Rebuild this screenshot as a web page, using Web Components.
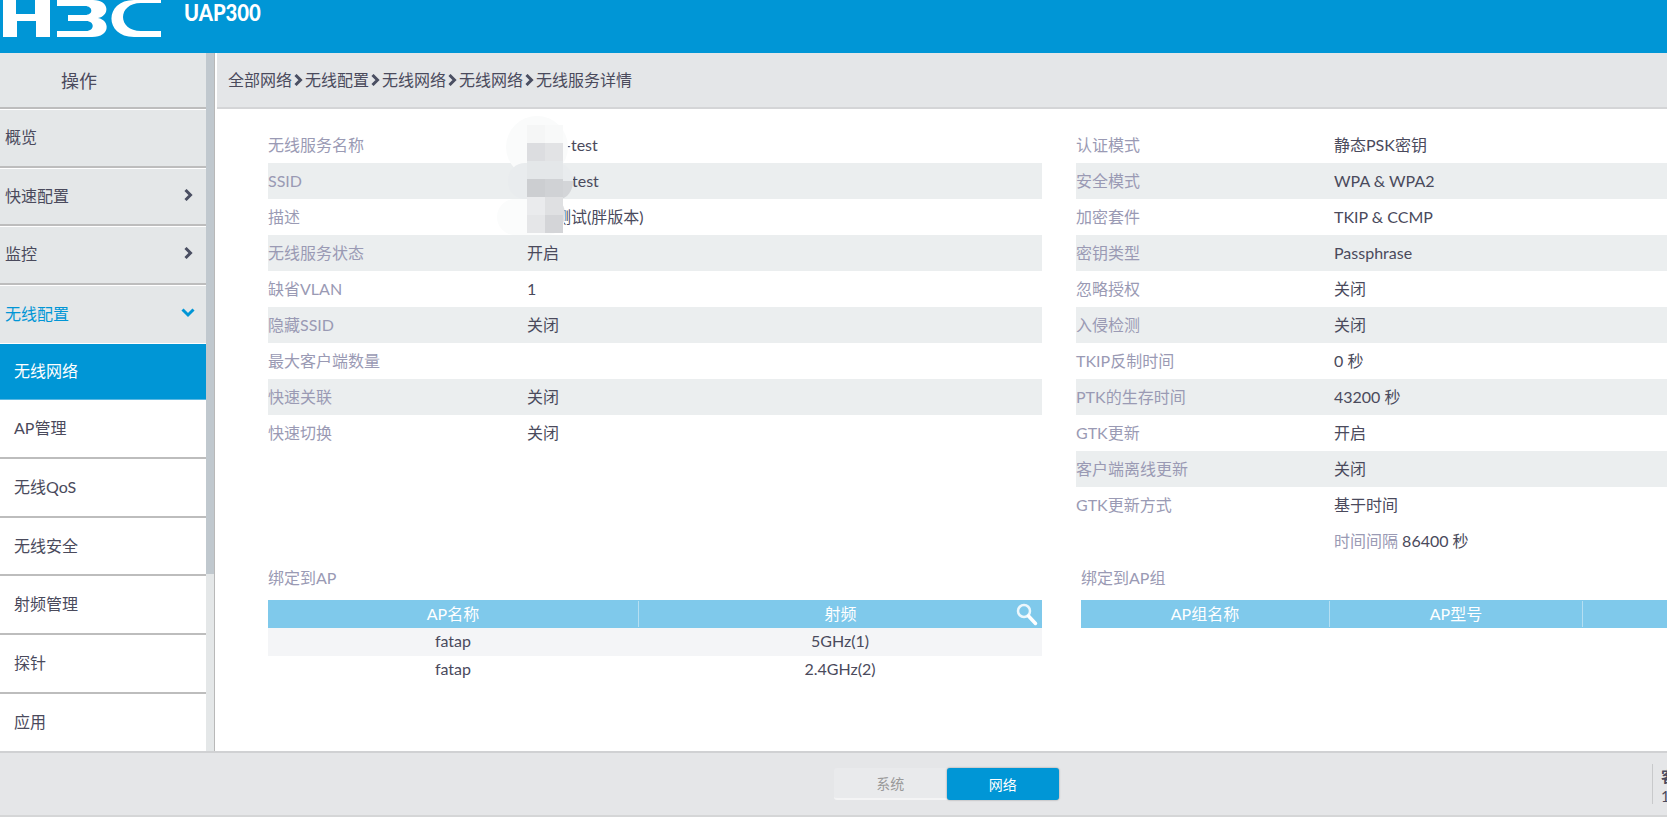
<!DOCTYPE html>
<html lang="zh">
<head>
<meta charset="utf-8">
<title>UAP300</title>
<style>
  html, body { margin: 0; height: 818px; overflow: hidden; background: #fff; }
  body { font: 16px Lato, "Noto Sans CJK SC", sans-serif; color: #4a4a5c; display: flex; flex-direction: column; }
</style>
</head>
<body>
<template id="chev-right"><svg width="9" height="12" viewBox="0 0 9 12" fill="none" stroke="currentColor" stroke-width="3"><path d="M1.5 1l5 5-5 5"/></svg></template>

<app-header product="UAP300"></app-header>
<app-shell>
  <side-nav slot="nav"></side-nav>
  <bread-crumb slot="crumb" path="全部网络,无线配置,无线网络,无线网络,无线服务详情"></bread-crumb>
  <service-detail slot="body">
    <kv-list slot="left" style="--key-width:259px">
      <kv-row label="无线服务名称"><span style="padding-left:38px">-test</span></kv-row>
      <kv-row label="SSID"><span style="padding-left:45px">test</span></kv-row>
      <kv-row label="描述"><span style="padding-left:28px">测试(胖版本)</span></kv-row>
      <kv-row label="无线服务状态">开启</kv-row>
      <kv-row label="缺省VLAN">1</kv-row>
      <kv-row label="隐藏SSID">关闭</kv-row>
      <kv-row label="最大客户端数量"></kv-row>
      <kv-row label="快速关联">关闭</kv-row>
      <kv-row label="快速切换">关闭</kv-row>
    </kv-list>
    <kv-list slot="right" style="--key-width:258px">
      <kv-row label="认证模式">静态PSK密钥</kv-row>
      <kv-row label="安全模式">WPA &amp; WPA2</kv-row>
      <kv-row label="加密套件">TKIP &amp; CCMP</kv-row>
      <kv-row label="密钥类型">Passphrase</kv-row>
      <kv-row label="忽略授权">关闭</kv-row>
      <kv-row label="入侵检测">关闭</kv-row>
      <kv-row label="TKIP反制时间">0 秒</kv-row>
      <kv-row label="PTK的生存时间">43200 秒</kv-row>
      <kv-row label="GTK更新">开启</kv-row>
      <kv-row label="客户端离线更新">关闭</kv-row>
      <kv-row label="GTK更新方式">基于时间</kv-row>
      <kv-row label="" plain><span style="color:#9a9ab4">时间间隔</span> 86400 秒</kv-row>
    </kv-list>
    <bind-table slot="bind-left" title="绑定到AP" cols="370,404" heads="AP名称,射频" rows="fatap|5GHz(1);fatap|2.4GHz(2)" search></bind-table>
    <bind-table slot="bind-right" title="绑定到AP组" cols="248,253,340" heads="AP组名称,AP型号,"></bind-table>
  </service-detail>
  <blur-patch slot="body"></blur-patch>
</app-shell>
<app-footer></app-footer>

<script>
const chevron = () => document.getElementById('chev-right').innerHTML;

class AppHeader extends HTMLElement {
  constructor() {
    super();
    this.attachShadow({ mode: 'open' });
    this.shadowRoot.innerHTML = `
      <style>
        :host { display: flex; flex: none; height: 53px; background: #0096d6; overflow: hidden; }
        svg { flex: none; display: block; }
        b { margin-left: 14px; color: #fff; font-size: 22px; line-height: 26px; height: 26px; font-weight: 900; transform: scaleX(.92); transform-origin: left; }
      </style>
      <svg width="170" height="53" viewBox="0 0 170 53" fill="#fff">
        <path d="M3 0h13v14h19V0h15v37H36V21H17v16H3z"/>
        <path d="M57 0h36c17 0 17 16 5 18 12 2 13 19-6 19H57v-6h29c9 0 9-10 0-10H68v-6h17c9 0 8-9 0-9H57z"/>
        <path d="M161 0v3h-20c-24 0-24 28 0 28h20v6h-27c-30 0-30-37 0-37z"/>
      </svg>
      <b>${this.getAttribute('product')}</b>`;
  }
}
customElements.define('app-header', AppHeader);

class AppShell extends HTMLElement {
  constructor() {
    super();
    this.attachShadow({ mode: 'open' });
    this.shadowRoot.innerHTML = `
      <style>
        :host { display: flex; flex: 1; min-height: 0; }
        .nav { flex: none; width: 215px; display: flex; }
        .main { flex: 1; min-width: 0; position: relative; overflow: hidden; border-left: 2px solid #fff; }
      </style>
      <div class="nav"><slot name="nav"></slot></div>
      <div class="main"><slot name="crumb"></slot><slot name="body"></slot></div>`;
  }
}
customElements.define('app-shell', AppShell);

class SideNav extends HTMLElement {
  constructor() {
    super();
    this.attachShadow({ mode: 'open' });
    const top = [['概览'], ['快速配置', 'right'], ['监控', 'right'], ['无线配置', 'down']];
    const sub = ['AP管理', '无线QoS', '无线安全', '射频管理', '探针', '应用'];
    const down = '<svg width="14" height="10" viewBox="0 0 14 10" fill="none" stroke="#0096d6" stroke-width="3"><path d="M1.5 1.5L7 7l5.5-5.5"/></svg>';
    this.shadowRoot.innerHTML = `
      <style>
        :host { display: flex; width: 215px; height: 100%; }
        .list { width: 206px; display: flex; flex-direction: column; background: #fff; }
        .title { height: 56px; flex: none; display: flex; align-items: center; padding-left: 61px; background: #e4e7e8; font-size: 18px; border-bottom: 2px solid #bdbdbd; box-sizing: border-box; }
        .item { display: flex; align-items: center; justify-content: space-between; box-sizing: border-box; padding: 0 13px 3px 5px; background: #e4e7e8; border-bottom: 2px solid #bdbdbd; border-top: 1px solid #fff; color: #4a4a5c; }
        .top { flex: none; height: 58.5px; }
        .item.open { color: #0096d6; border-bottom: 0; padding-right: 11px; }
        .item svg { color: #4a4f62; }
        .sub { flex: 1; min-height: 0; background: #fff; padding-left: 14px; border-top: 0; }
        .sub.active { flex: none; height: 57px; background: #0096d6; color: #fff; border-bottom: 1px solid #5bb8e2; border-top: 1px solid #fff; }
        .sub:last-child { border-bottom: 0; }
        .track { width: 8px; background: #e4e7e8; }
        .thumb { height: 521px; background: #c0c8ce; }
        .edge { width: 1px; background: #b8b8b8; }
      </style>
      <div class="list">
        <div class="title">操作</div>
        ${top.map(([t, k]) => `<div class="item top ${k === 'down' ? 'open' : ''}"><span>${t}</span>${k === 'right' ? chevron() : k === 'down' ? down : ''}</div>`).join('')}
        <div class="item sub active"><span>无线网络</span></div>
        ${sub.map(t => `<div class="item sub"><span>${t}</span></div>`).join('')}
      </div>
      <div class="track"><div class="thumb"></div></div>
      <div class="edge"></div>`;
  }
}
customElements.define('side-nav', SideNav);

class BreadCrumb extends HTMLElement {
  constructor() {
    super();
    this.attachShadow({ mode: 'open' });
    const parts = this.getAttribute('path').split(',');
    this.shadowRoot.innerHTML = `
      <style>
        :host { display: flex; align-items: center; height: 56px; box-sizing: border-box; padding: 0 0 2px 11px; background: #e4e6e8; border-bottom: 2px solid #d4d5d7; color: #4a4a5c; }
        svg { margin: 1px 2px 0 2px; color: #4a4f62; }
      </style>
      ${parts.map(p => `<span>${p}</span>`).join(chevron())}`;
  }
}
customElements.define('bread-crumb', BreadCrumb);

class ServiceDetail extends HTMLElement {
  constructor() {
    super();
    this.attachShadow({ mode: 'open' });
    this.shadowRoot.innerHTML = `
      <style>
        :host { display: grid; grid-template-columns: 774px 774px; column-gap: 34px; padding: 18px 0 0 51px; width: 1640px; }
        .bind-right { padding-left: 5px; }
      </style>
      <slot name="left"></slot><slot name="right"></slot>
      <div><slot name="bind-left"></slot></div>
      <div class="bind-right"><slot name="bind-right"></slot></div>`;
  }
}
customElements.define('service-detail', ServiceDetail);

class KvList extends HTMLElement {
  constructor() {
    super();
    this.attachShadow({ mode: 'open' }).innerHTML = `<style>:host { display: block; }</style><slot></slot>`;
  }
}
customElements.define('kv-list', KvList);

class KvRow extends HTMLElement {
  constructor() {
    super();
    this.attachShadow({ mode: 'open' });
    this.shadowRoot.innerHTML = `
      <style>
        :host { display: flex; height: 36px; box-sizing: border-box; padding-bottom: 2px; align-items: center; }
        :host(:nth-child(even):not([plain])) { background: #ebeeef; }
        .k { flex: none; width: var(--key-width); color: #9a9ab4; }
        .v { color: #4a4a5c; }
      </style>
      <span class="k">${this.getAttribute('label')}</span>
      <span class="v"><slot></slot></span>`;
  }
}
customElements.define('kv-row', KvRow);

class BindTable extends HTMLElement {
  constructor() {
    super();
    this.attachShadow({ mode: 'open' });
    const cols = this.getAttribute('cols').split(',').map(c => c + 'px').join(' ');
    const heads = this.getAttribute('heads').split(',');
    const rows = (this.getAttribute('rows') || '').split(';').filter(Boolean).map(r => r.split('|'));
    const search = this.hasAttribute('search') ? `<svg class="search" width="22" height="24" viewBox="0 0 22 24" fill="none" stroke="#fff"><circle cx="8" cy="9" r="6" stroke-width="2.5" opacity=".85"/><path d="M12.5 14l7 7.5" stroke-width="3.5" stroke-linecap="round"/></svg>` : '';
    this.shadowRoot.innerHTML = `
      <style>
        :host { display: block; position: relative; }
        h4 { margin: 0; font: inherit; color: #9a9ab4; height: 41px; line-height: 37px; }
        .row { display: grid; grid-template-columns: ${cols}; height: 28px; box-sizing: border-box; align-items: center; text-align: center; }
        .cells { padding-bottom: 3px; }
        .head { background: #7fc9eb; color: #fff; }
        .head span { height: 26px; line-height: 25px; border-left: 1px solid #b5dff2; }
        .head span:first-child { border-left: 0; }
        .search { position: absolute; right: 4px; top: 43px; }
      </style>
      <h4>${this.getAttribute('title')}</h4>
      <div class="row head">${heads.map(h => `<span>${h}</span>`).join('')}</div>
      ${rows.map((r, i) => `<div class="row cells" style="background:${i % 2 ? '#fff' : '#f4f5f7'}">${r.map(c => `<span>${c}</span>`).join('')}</div>`).join('')}
      ${search}`;
  }
}
customElements.define('bind-table', BindTable);

// the smudged-out part of the name in the reference
class BlurPatch extends HTMLElement {
  constructor() {
    super();
    this.attachShadow({ mode: 'open' });
    const cells = [
      ['#f5f6f6', '#f8f9f9'], ['#dcdde0', '#e2e3e5'], ['#e4e7e9', '#e4e7e9'],
      ['#ccced1', '#d0d2d5'], ['#eaebed', '#dfe0e2'], ['#e5e6e8', '#d4d5d8']
    ];
    this.shadowRoot.innerHTML = `
      <style>:host { position: absolute; left: 278px; top: 62px; width: 90px; height: 125px; pointer-events: none; }</style>
      <svg width="90" height="125" viewBox="0 0 90 125">
        <circle cx="42" cy="32" r="31" fill="#fafbfb"/>
        <rect x="13" y="48" width="65" height="36" rx="17" fill="#e9ecee"/>
        <path d="M60 66h18c0 10-6 18-14 18h-4z" fill="#d3d5d8"/>
        <rect x="2" y="84" width="68" height="36" rx="18" fill="#fbfcfc"/>
        <path d="M55 84h8c5 4 7 10 7 16s-4 14-10 18h-5z" fill="#dfe0e2"/>
        ${cells.map((row, i) => row.map((c, j) => `<rect x="${32 + j * 18}" y="${10 + i * 18}" width="18" height="18" fill="${c}"/>`).join('')).join('')}
      </svg>`;
  }
}
customElements.define('blur-patch', BlurPatch);

class AppFooter extends HTMLElement {
  constructor() {
    super();
    this.attachShadow({ mode: 'open' });
    this.shadowRoot.innerHTML = `
      <style>
        :host { display: flex; flex: none; align-items: center; height: 66px; margin-bottom: 1px; box-sizing: border-box; padding-left: 834px; background: #e5e6e8; border-top: 2px solid #d0d1d3; border-bottom: 2px solid #d5d6d7; overflow: hidden; }
        .toggle { display: flex; width: 225px; height: 32px; font-size: 14px; }
        .toggle span { flex: 1; display: flex; align-items: center; justify-content: center; }
        .off { color: #999; background: #e9eaec; border-radius: 3px 0 0 3px; border-bottom: 2px solid #f4f4f5; }
        .on { color: #fff; background: #0096d6; border-radius: 3px; box-shadow: 0 0 2px #888; }
        .stat { margin-left: auto; width: 15px; height: 40px; border-left: 1px solid #c8c9cb; padding: 2px 0 0 8px; box-sizing: border-box; overflow: hidden; white-space: nowrap; line-height: 20px; color: #4a4a5c; font-size: 15px; }
      </style>
      <div class="toggle"><span class="off">系统</span><span class="on">网络</span></div>
      <div class="stat"><b>客户端</b><br>1</div>`;
  }
}
customElements.define('app-footer', AppFooter);
</script>
</body>
</html>
